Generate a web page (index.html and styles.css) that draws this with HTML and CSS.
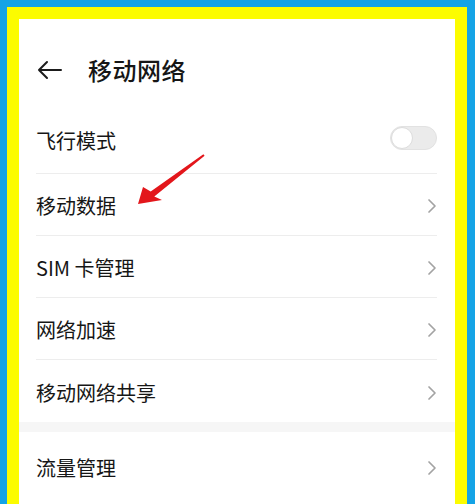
FILE: index.html
```html
<!DOCTYPE html>
<html lang="zh-CN">
<head>
<meta charset="utf-8">
<title>移动网络</title>
<link rel="stylesheet" href="styles.css">
</head>
<body>
<div class="frame">
  <div class="inner">
    <div class="screen">
      <header class="header">
        <svg class="back" width="26" height="20" viewBox="0 0 26 20">
          <path d="M24 10 H2 M10 2 L2 10 L10 18" fill="none" stroke="#1b1b1b" stroke-width="2" stroke-linecap="round" stroke-linejoin="round"/>
        </svg>
        <h1 class="title">移动网络</h1>
      </header>
      <ul class="list">
        <li class="row first"><span class="label">飞行模式</span><span class="toggle"><span class="knob"></span></span></li>
        <li class="row"><span class="label">移动数据</span><svg class="chev" width="10" height="16" viewBox="0 0 10 16"><path d="M2 2 L8 8 L2 14" fill="none" stroke="#a3a3a3" stroke-width="1.7" stroke-linecap="round" stroke-linejoin="round"/></svg></li>
        <li class="row"><span class="label">SIM 卡管理</span><svg class="chev" width="10" height="16" viewBox="0 0 10 16"><path d="M2 2 L8 8 L2 14" fill="none" stroke="#a3a3a3" stroke-width="1.7" stroke-linecap="round" stroke-linejoin="round"/></svg></li>
        <li class="row"><span class="label">网络加速</span><svg class="chev" width="10" height="16" viewBox="0 0 10 16"><path d="M2 2 L8 8 L2 14" fill="none" stroke="#a3a3a3" stroke-width="1.7" stroke-linecap="round" stroke-linejoin="round"/></svg></li>
        <li class="row last"><span class="label">移动网络共享</span><svg class="chev" width="10" height="16" viewBox="0 0 10 16"><path d="M2 2 L8 8 L2 14" fill="none" stroke="#a3a3a3" stroke-width="1.7" stroke-linecap="round" stroke-linejoin="round"/></svg></li>
      </ul>
      <div class="band"></div>
      <ul class="list">
        <li class="row last tall"><span class="label">流量管理</span><svg class="chev" width="10" height="16" viewBox="0 0 10 16"><path d="M2 2 L8 8 L2 14" fill="none" stroke="#a3a3a3" stroke-width="1.7" stroke-linecap="round" stroke-linejoin="round"/></svg></li>
      </ul>
    </div>
  </div>
  <svg class="pointer" width="475" height="504" viewBox="0 0 475 504">
    <polygon points="138,204 143,187 150.7,191.6 203.4,154.2 204.6,155.8 154.3,196.4 162,200" fill="#e3161b"/>
  </svg>
</div>
</body>
</html>
```

FILE: styles.css
```css
* { box-sizing: border-box; }
html, body {
  margin: 0;
  padding: 0;
  width: 475px;
  height: 504px;
  overflow: hidden;
}
body {
  font-family: "Noto Sans CJK SC", "Noto Sans", sans-serif;
  color: #161616;
}
.frame {
  position: relative;
  width: 475px;
  height: 504px;
  background: #14a3e6;
  padding: 7px 8px 0 7px;
}
.inner {
  height: 100%;
  background: #fcfc00;
  padding: 12px 12px 0 12px;
}
.screen {
  height: 100%;
  background: #ffffff;
  overflow: hidden;
}
.header {
  height: 93px;
  padding: 9px 0 0 18px;
  display: flex;
  align-items: center;
}
.back { display: block; margin-right: 25px; }
.title {
  margin: 0;
  font-size: 24px;
  font-weight: 500;
  line-height: 1;
  letter-spacing: 0.5px;
}
.list {
  list-style: none;
  margin: 0;
  padding: 0 18px 0 17px;
}
.row {
  height: 62px;
  border-bottom: 1px solid #ededed;
  display: flex;
  align-items: center;
  justify-content: space-between;
  padding-top: 3px;
}
.row.first { padding-top: 0; padding-bottom: 4px; }
.row.last { border-bottom: none; }
.row.tall { height: 68px; }
.label {
  font-size: 20px;
  line-height: 1;
}
.chev { display: block; }
.toggle {
  width: 47px;
  height: 24px;
  border-radius: 12px;
  background: #ebebeb;
  border: 1px solid #e2e2e2;
  position: relative;
  margin-top: -5px;
}
.knob {
  position: absolute;
  left: 0;
  top: 0;
  width: 22px;
  height: 22px;
  border-radius: 50%;
  background: #ffffff;
  border: 1px solid #dcdcdc;
}
.band {
  height: 10px;
  background: #f6f6f6;
}
.pointer {
  position: absolute;
  left: 0;
  top: 0;
  pointer-events: none;
}
```
